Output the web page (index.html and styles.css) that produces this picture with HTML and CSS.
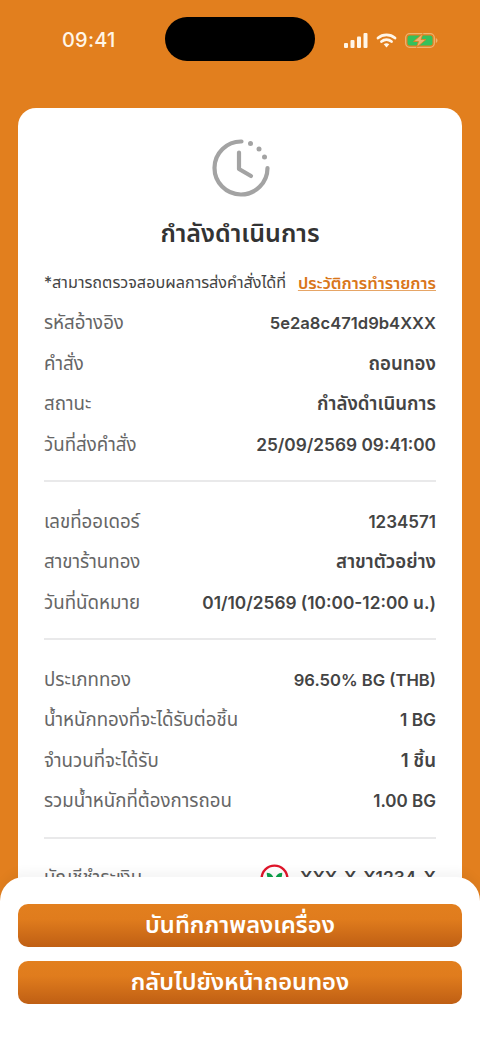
FILE: index.html
```html
<!DOCTYPE html>
<html lang="th">
<head>
<meta charset="utf-8">
<title>กำลังดำเนินการ</title>
<link rel="stylesheet" href="styles.css">
</head>
<body>
<div class="screen">
  <header class="status">
    <span class="time">09:41</span>
    <span class="island"></span>
    <span class="status-icons">
      <svg width="24" height="15" viewBox="0 0 24 15"><g fill="#fff6e8"><rect x="0" y="10" width="4" height="5" rx="1"/><rect x="6.500" y="7" width="4" height="8" rx="1"/><rect x="13" y="3.500" width="4" height="11.500" rx="1"/><rect x="19.500" y="0" width="4" height="15" rx="1"/></g></svg>
      <svg width="21" height="15" viewBox="0 0 20 15"><g fill="none" stroke="#fff6e8" stroke-linecap="round"><path d="M1.500 5C6.300.8 13.700.8 18.500 5" stroke-width="2.800"/><path d="M5 8.500C7.900 6.100 12.100 6.100 15 8.500" stroke-width="2.800"/></g><path d="M7.200 11.200C9 9.800 11 9.800 12.800 11.200L10 14.500Z" fill="#fff6e8"/></svg>
      <svg width="33" height="15" viewBox="0 0 33 15"><rect x=".7" y=".7" width="28.600" height="13.600" rx="4" fill="none" stroke="#eeb36f" stroke-width="1.300"/><rect x="2.500" y="2.500" width="25" height="10" rx="2.500" fill="#35c15b"/><path d="M30.800 5v5c1.200-.4 1.700-1.400 1.700-2.500s-.5-2.100-1.700-2.500Z" fill="#eeb36f"/><path d="M18 .5 8.500 8.500h5L11.500 14.500l9.500-8h-5Z" fill="#eeb36f" stroke="#e27f1e" stroke-width=".8"/></svg>
    </span>
  </header>

  <main class="card">
    <svg class="clock" width="60" height="60" viewBox="0 0 60 60">
      <g fill="none" stroke="#a3a3a3" stroke-linecap="round" stroke-linejoin="round" stroke-width="4.200">
        <path d="M30.500 3.500A26.500 26.500 0 1 0 56.500 30"/>
        <path d="M28 14.500V31l12 7"/>
      </g>
      <g fill="#a3a3a3"><circle cx="39.500" cy="5.500" r="2.500"/><circle cx="48" cy="11" r="2.500"/><circle cx="53.500" cy="19" r="2.500"/></g>
    </svg>
    <h1 class="title">กำลังดำเนินการ</h1>

    <p class="note"><span>*สามารถตรวจสอบผลการส่งคำสั่งได้ที่</span><a class="link">ประวัติการทำรายการ</a></p>

    <section class="group">
      <div class="row"><span>รหัสอ้างอิง</span><b class="num narrow">5e2a8c471d9b4XXX</b></div>
      <div class="row"><span>คำสั่ง</span><b>ถอนทอง</b></div>
      <div class="row"><span>สถานะ</span><b>กำลังดำเนินการ</b></div>
      <div class="row"><span>วันที่ส่งคำสั่ง</span><b class="num wide">25/09/2569 09:41:00</b></div>
    </section>
    <hr class="rule">
    <section class="group">
      <div class="row"><span>เลขที่ออเดอร์</span><b class="num">1234571</b></div>
      <div class="row"><span>สาขาร้านทอง</span><b>สาขาตัวอย่าง</b></div>
      <div class="row"><span>วันที่นัดหมาย</span><b class="num wide">01/10/2569 (10:00-12:00 น.)</b></div>
    </section>
    <hr class="rule">
    <section class="group">
      <div class="row"><span>ประเภททอง</span><b class="num narrow">96.50% BG (THB)</b></div>
      <div class="row"><span>น้ำหนักทองที่จะได้รับต่อชิ้น</span><b class="num wide">1 BG</b></div>
      <div class="row"><span>จำนวนที่จะได้รับ</span><b>1 ชิ้น</b></div>
      <div class="row"><span>รวมน้ำหนักที่ต้องการถอน</span><b class="num">1.00 BG</b></div>
    </section>
    <hr class="rule">
    <section class="group">
      <div class="row"><span>บัญชีชำระเงิน</span>
        <b class="num wide bank">
          <svg width="29" height="29" viewBox="0 0 30 30"><circle cx="15" cy="15" r="13.300" fill="#fff" stroke="#e0162b" stroke-width="2.400"/><path d="M14.500 19C9 18 7 14 7 9c4 0 8 3 7.500 10Z" fill="#0ba14a"/><path d="M15.500 19C21 18 23 14 23 9c-4 0-8 3-7.500 10Z" fill="#0ba14a"/></svg>
          XXX-X-X1234-X
        </b>
      </div>
    </section>
  </main>

  <footer class="actions">
    <button class="btn">บันทึกภาพลงเครื่อง</button>
    <button class="btn">กลับไปยังหน้าถอนทอง</button>
  </footer>
</div>
</body>
</html>
```

FILE: styles.css
```css
* { box-sizing: border-box; }
html, body { margin: 0; padding: 0; }
body {
  font-family: Inter, "Noto Sans Thai", "Noto Sans", sans-serif;
  color: #444;
}
.screen {
  position: relative;
  width: 480px;
  height: 1044px;
  overflow: hidden;
  background: #e27f1e;
}
.status {
  position: relative;
  height: 108px;
  padding: 28px 42px 0 62px;
  display: flex;
  justify-content: space-between;
  align-items: flex-start;
}
.time {
  color: #fff6e8;
  font-size: 20px;
  font-weight: 500;
  line-height: 24px;
  letter-spacing: .2px;
}
.island {
  position: absolute;
  left: 165px;
  top: 17px;
  width: 150px;
  height: 44px;
  border-radius: 22px;
  background: #000;
}
.status-icons {
  display: flex;
  align-items: center;
  gap: 8px;
  height: 24px;
}
.status-icons svg { display: block; }
.card {
  margin: 0 18px;
  padding: 30px 26px 0;
  background: #fff;
  border-radius: 18px;
  display: flex;
  flex-direction: column;
  min-height: 960px;
}
.clock { display: block; align-self: center; margin-left: 2px; }
.title {
  margin: 20px 0 0;
  text-align: center;
  font-size: 25px;
  line-height: 30px;
  font-weight: 600;
  color: #333;
}
.note {
  margin: 15px 0 0;
  height: 40px;
  display: flex;
  justify-content: space-between;
  align-items: center;
  font-size: 16.2px;
  color: #444;
}
.link {
  color: #d9761a;
  font-weight: 600;
  font-size: 16.6px;
  text-decoration: underline;
  text-decoration-color: #e6a566;
  text-underline-offset: 1px;
}
.group { display: flex; flex-direction: column; }
.row {
  height: 40.5px;
  display: flex;
  justify-content: space-between;
  align-items: center;
  font-size: 18.7px;
  line-height: 26px;
  color: #666;
}
.row b {
  font-weight: 600;
  color: #444;
}
.row .num { font-size: 17px; }
.row .wide { font-size: 17.3px; }
.row .narrow { font-size: 16.6px; }
.row .bank { display: flex; align-items: center; gap: 11px; }
.rule {
  margin: 15px 0 19.5px;
  border: 0;
  height: 2px;
  background: #e9e9ea;
}
.actions {
  position: absolute;
  left: 0;
  right: 0;
  top: 877px;
  bottom: 0;
  padding: 27px 18px 0;
  display: flex;
  flex-direction: column;
  gap: 14px;
  background: #fff;
  border-radius: 24px 24px 0 0;
  box-shadow: 0 -6px 10px rgba(0,0,0,.04);
}
.btn {
  height: 43px;
  border: 0;
  border-radius: 10px;
  background: linear-gradient(180deg, #e27f1e 0%, #e07c1d 35%, #bf5f14 100%);
  color: #fff;
  font-family: inherit;
  font-size: 23.7px;
  font-weight: 600;
}
```
